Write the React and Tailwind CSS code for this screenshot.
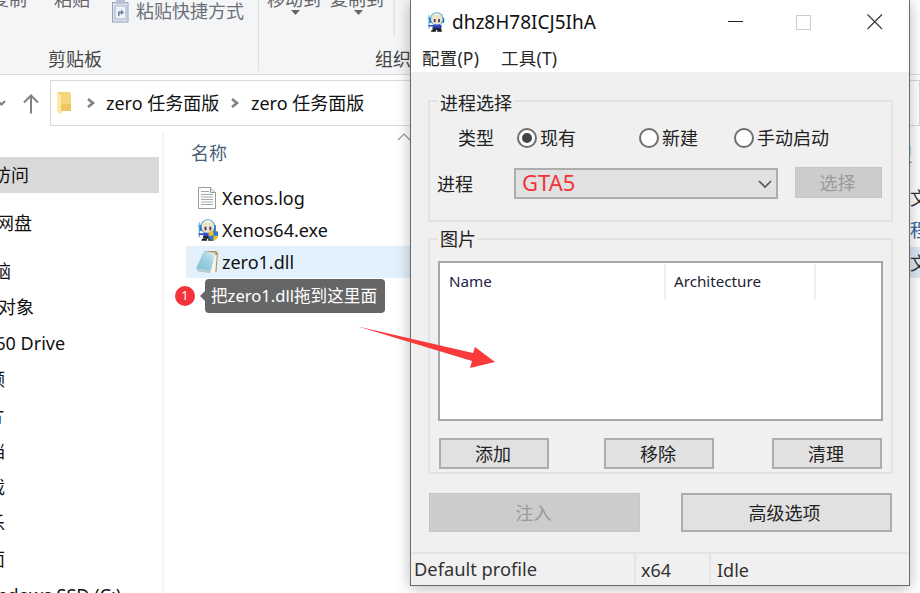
import React from "react";

const FONT = "font-['Noto_Sans','Noto_Sans_CJK_SC',sans-serif]";

function Mascot({ size = 20, shield = false }) {
  return (
    <svg width={size} height={size} viewBox="0 0 20 20" className="shrink-0">
      <path d="M1.5 7 L3 2 L4.5 7 Z" fill="#6fc4ea" />
      <path d="M3 6.5 V16.5" stroke="#4f9fd4" strokeWidth="1" />
      <circle cx="10.8" cy="7" r="6.8" fill="#4aa6d8" />
      <rect x="3.2" y="5.5" width="2.2" height="5.5" rx="1" fill="#2a7fb8" />
      <rect x="16.2" y="5.5" width="2" height="5.5" rx="1" fill="#2a7fb8" />
      <ellipse cx="10.8" cy="7" rx="5.8" ry="6" fill="#ebe6ca" />
      <path d="M7 3.2 C8.5 1.5 12.5 1.5 14 3 C12 2.6 9 2.6 7 3.2 Z" fill="#fffdf0" />
      <rect x="7.8" y="7" width="1.7" height="3.2" fill="#5a2a6a" />
      <rect x="12.2" y="7" width="1.7" height="3.2" fill="#5a2a6a" />
      <path d="M2.5 13 H7 L8 12.6 H14 L16 13.5 L15 16.5 H7 L6.5 14.6 H2.5 Z" fill="#3b48cc" />
      <path d="M6.5 15.5 H15 L15.5 18 H6.5 Z" fill="#1f2a40" />
      <path d="M5.5 18 H10 V19.8 H5 Z M11.2 18 H15.5 L16 19.8 H11.2 Z" fill="#1a1a1a" />
      {shield && (
        <g>
          <path d="M11.5 11.5 L15.8 10.4 L20 11.5 V15.5 C20 18 17.5 19.5 15.8 20 C14 19.5 11.5 18 11.5 15.5 Z" fill="#f0c030" />
          <path d="M15.8 10.4 L20 11.5 V15.3 H15.8 Z" fill="#2f78d0" />
          <path d="M11.5 15.3 H15.8 V20 C14 19.5 11.5 18 11.5 15.5 Z" fill="#2f78d0" />
        </g>
      )}
    </svg>
  );
}

function DocIcon() {
  return (
    <svg width="18" height="22" viewBox="0 0 18 22" className="shrink-0">
      <path d="M0.5 0.5 H12.5 L17.5 5.5 V21.5 H0.5 Z" fill="#fff" stroke="#9b9b9b" />
      <path d="M12.5 0.5 V5.5 H17.5" fill="#e8e8e8" stroke="#9b9b9b" />
      <path d="M3 4.5 H11 M3 7.5 H15 M3 10 H15 M3 12.5 H15 M3 15 H15 M3 17.5 H15" stroke="#a8a8a8" strokeWidth="1" />
    </svg>
  );
}

function NoteIcon() {
  return (
    <svg width="24" height="24" viewBox="0 0 24 24" className="shrink-0">
      <defs>
        <linearGradient id="notepad" x1="0" y1="1" x2="1" y2="0">
          <stop offset="0" stopColor="#7fc0d6" />
          <stop offset="0.55" stopColor="#9ed0e0" />
          <stop offset="1" stopColor="#dff1f6" />
        </linearGradient>
      </defs>
      <path d="M10 1 H21 L23 3 L21.5 22 H17 Z" fill="#b8935c" />
      <path d="M19 5 L21.8 5 L20.2 23 L15 23 Z" fill="#f4f4f4" />
      <path d="M9 1 L20.5 3 L15.5 21 L1 18.5 Z" fill="url(#notepad)" />
      <path d="M1 18.5 L15.5 21 L15 23 L3 21.5 Z" fill="#b9c9cf" />
    </svg>
  );
}

function Radio({ checked }) {
  return (
    <span className="w-5 h-5 rounded-full border-2 border-[#6e6e6e] bg-white flex items-center justify-center shrink-0">
      {checked && <span className="w-[10px] h-[10px] rounded-full bg-[#444]" />}
    </span>
  );
}

function Btn({ children, className = "" }) {
  return (
    <div className={"border-2 border-[#adadad] bg-[#e1e1e1] text-[#222] text-[18px] leading-none flex items-center justify-center " + className}>
      {children}
    </div>
  );
}

function Disabled({ children, className = "" }) {
  return (
    <div className={"bg-[#cccccc] border border-[#c6c6c6] text-[#9b9b9b] text-[18px] leading-none flex items-center justify-center " + className}>
      {children}
    </div>
  );
}

function Group({ title, className = "", titleClass = "", children }) {
  return (
    <div className={"relative border-2 border-[#e3e3e3] " + className}>
      <div className={"absolute left-[8px] bg-[#f0f0f0] px-[2px] text-[18px] leading-[18px] text-[#222] " + titleClass}>{title}</div>
      {children}
    </div>
  );
}

function Dialog() {
  return (
    <div className="absolute left-[410px] top-0 w-[500px] h-[586px] flex flex-col bg-white border-x border-b border-[#6a6a6a] shadow-[0_2px_14px_rgba(0,0,0,0.28)]">
      <div className="h-[44px] flex items-center pl-[15px] shrink-0">
        <Mascot size={20} />
        <span className="ml-[6px] text-[19px] leading-none text-[#111]">dhz8H78ICJ5IhA</span>
        <svg width="16" height="16" viewBox="0 0 16 16" className="ml-[132px]"><path d="M0 7.5 H15" stroke="#222" strokeWidth="1" /></svg>
        <span className="ml-[52px] w-[15px] h-[15px] border border-[#cccccc]" />
        <svg width="16" height="16" viewBox="0 0 16 16" className="ml-[56px]"><path d="M0.5 0.5 L15 15 M15 0.5 L0.5 15" stroke="#333" strokeWidth="1.1" /></svg>
      </div>
      <div className="h-[28px] pt-[2px] flex items-center pl-[11px] text-[17.5px] leading-none text-[#2a2a2a] tracking-[0.2px] shrink-0">
        <span>配置(P)</span>
        <span className="ml-[22px]">工具(T)</span>
      </div>
      <div className="flex-1 bg-[#f0f0f0] pl-[17px] pt-[28px] flex flex-col min-h-0">
        <Group title="进程选择" titleClass="top-[-8px]" className="w-[465px] h-[122px] pt-[22px]">
          <div className="h-7 flex items-center text-[18px] leading-none text-[#222]">
            <span className="w-[87px] pl-[28px] shrink-0">类型</span>
            <div className="w-[122px] flex items-center gap-[3px] shrink-0"><Radio checked /><span>现有</span></div>
            <div className="w-[95px] flex items-center gap-[3px] shrink-0"><Radio /><span>新建</span></div>
            <div className="flex items-center gap-[3px]"><Radio /><span>手动启动</span></div>
          </div>
          <div className="mt-[16px] flex items-start text-[18px] leading-none text-[#222]">
            <span className="w-[84px] pl-[7px] h-[31px] flex items-center shrink-0">进程</span>
            <div className="w-[264px] h-[31px] border-2 border-[#adadad] bg-[#e1e1e1] flex items-center justify-between pl-[6px] pr-[3px] shrink-0">
              <span className="text-[22px] leading-none -mt-[3px] text-[#f43538]">GTA5</span>
              <svg width="16" height="10" viewBox="0 0 16 10"><path d="M2 2 L8 8 L14 2" fill="none" stroke="#555" strokeWidth="1.6" /></svg>
            </div>
            <Disabled className="ml-[17px] -mt-px w-[87px] h-[31px] pr-[2px]">选择</Disabled>
          </div>
        </Group>
        <Group title="图片" titleClass="top-[-10px]" className="mt-[16px] w-[465px] h-[236px] pt-[21px] pl-[8px]">
          <div className="w-[445px] h-[160px] border-2 border-[#a4a6aa] bg-white flex items-start pt-px">
            <div className="w-[226px] h-[36px] border-r-2 border-[#efefef] flex items-center pl-[9px] text-[15.2px] leading-none text-[#22224a]">Name</div>
            <div className="w-[150px] h-[36px] border-r-2 border-[#efefef] flex items-center pl-[8px] text-[15.2px] leading-none text-[#223]">Architecture</div>
          </div>
          <div className="mt-[17px] ml-px flex">
            <Btn className="w-[110px] h-[31px] pr-[2px]">添加</Btn>
            <Btn className="ml-[55px] w-[110px] h-[31px] pr-[2px]">移除</Btn>
            <Btn className="ml-[58px] w-[110px] h-[31px] pr-[2px]">清理</Btn>
          </div>
        </Group>
        <div className="mt-[19px] ml-px flex">
          <Disabled className="w-[211px] h-[39px] pr-[2px]">注入</Disabled>
          <Btn className="ml-[41px] w-[211px] h-[39px] pr-[4px]">高级选项</Btn>
        </div>
      </div>
      <div className="bg-[#f0f0f0] h-[33px] shrink-0 border-t-2 border-[#e4e4e4] flex text-[18px] leading-none text-[#333]">
        <div className="w-[225px] border-r-2 border-[#e4e4e4] flex items-center pl-[3px] text-[18.3px]">Default profile</div>
        <div className="w-[75px] border-r-2 border-[#e4e4e4] flex items-center pl-[5px]">x64</div>
        <div className="flex-1 flex items-center pl-[6px]">Idle</div>
      </div>
    </div>
  );
}

function Ribbon() {
  return (
    <div className="h-[75px] flex shrink-0 border-b border-[#dadbdc] bg-white">
      <div className="w-[410px] bg-[#f4f5f7] flex overflow-hidden">
        <div className="w-[259px] h-[71px] border-r border-[#dfe0e2] flex flex-col shrink-0 overflow-hidden">
          <div className="h-[50px] flex items-start text-[#666] text-[18px] leading-[18px] shrink-0">
            <span className="-ml-[9px] -mt-[10px]">复制</span>
            <span className="ml-[27px] -mt-[10px]">粘贴</span>
            <svg width="17" height="23" viewBox="0 0 17 23" className="ml-[22px] shrink-0">
              <rect x="0.5" y="2.5" width="15.5" height="19.5" fill="#dde3ec" stroke="#92a4c0" />
              <rect x="4" y="0" width="9" height="4" fill="#b8c2d2" />
              <rect x="3" y="6" width="11" height="13" fill="#eef1f5" stroke="#a8b5c8" />
              <path d="M6 16 V11.5 H9 V9.5 L12 12.5 L9 15 V13.5 H7.5 V16 Z" fill="#6f83a3" />
            </svg>
            <span className="ml-[7px] mt-[2px] text-[#6b7078] whitespace-nowrap">粘贴快捷方式</span>
          </div>
          <div className="pl-[48px] text-[18px] leading-[18px] text-[#444]">剪贴板</div>
        </div>
        <div className="flex-1 flex flex-col min-w-0">
          <div className="h-[50px] flex items-start text-[#666] text-[18px] leading-[18px] shrink-0">
            <div className="ml-[8px] w-[63px] -mt-[10px] flex flex-col">
              <span className="whitespace-nowrap">移动到</span>
              <svg width="10" height="6" viewBox="0 0 10 6" className="ml-[24px] mt-[2px]"><path d="M0 0 H9 L4.5 5 Z" fill="#666" /></svg>
            </div>
            <div className="w-[63px] -mt-[10px] flex flex-col">
              <span className="whitespace-nowrap">复制到</span>
              <svg width="10" height="6" viewBox="0 0 10 6" className="ml-[24px] mt-[2px]"><path d="M0 0 H9 L4.5 5 Z" fill="#666" /></svg>
            </div>
            <span className="w-[2px] h-[35px] ml-[0px] bg-[#e4e5e7]" />
          </div>
          <div className="pl-[116px] text-[18px] leading-[18px] text-[#444] whitespace-nowrap">组织</div>
        </div>
      </div>
    </div>
  );
}

function AddressRow() {
  return (
    <div className="h-[57px] flex items-start shrink-0 bg-white">
      <div className="w-[50px] h-[57px] relative shrink-0 overflow-hidden">
        <svg width="8" height="8" viewBox="0 0 8 8" className="absolute left-0 top-[24px]"><path d="M-3 1 L1.5 5.5 L5 2" fill="none" stroke="#808080" strokeWidth="2" /></svg>
        <svg width="16" height="20" viewBox="0 0 16 20" className="absolute left-[23px] top-[19px]"><path d="M8 19.5 V1.5 M1 8.5 L8 1.5 L15 8.5" fill="none" stroke="#808080" strokeWidth="2" /></svg>
      </div>
      <div className="mt-[5px] h-[46px] flex-1 border border-[#d9d9d9] flex items-center pl-[6px] text-[18px] leading-none text-[#111] whitespace-nowrap">
        <svg width="15" height="22" viewBox="0 0 15 22" className="shrink-0">
          <path d="M0 0 H13 L14 3 V19 H5 L3 22 L0 19 Z" fill="#f5d67e" />
          <path d="M0 0 L4 4 V21 L0 19 Z" fill="#fbeaa8" />
          <path d="M4 12 H14 V19 H4 Z" fill="#edc65f" />
        </svg>
        <svg width="10" height="12" viewBox="0 0 10 12" className="ml-[14px]"><path d="M2 2 L7 6 L2 10" fill="none" stroke="#808080" strokeWidth="2.6" /></svg>
        <span className="ml-[10px] w-[114px]">zero 任务面版</span>
        <svg width="10" height="12" viewBox="0 0 10 12" className="ml-[10px]"><path d="M2 2 L7 6 L2 10" fill="none" stroke="#808080" strokeWidth="2.6" /></svg>
        <span className="ml-[11px]">zero 任务面版</span>
      </div>
    </div>
  );
}

const navItems = [
  ["快速访问", "ml-[-43px]", ""],
  ["百度网盘", "ml-[-40px]", "mt-3"],
  ["此电脑", "ml-[-43px]", "mt-3"],
  ["3D 对象", "ml-[-30px]", ""],
  ["360 Drive", "ml-[-15px]", ""],
  ["视频", "ml-[-31px]", ""],
  ["图片", "ml-[-31px]", ""],
  ["文档", "ml-[-31px]", ""],
  ["下载", "ml-[-31px]", ""],
  ["音乐", "ml-[-31px]", ""],
  ["桌面", "ml-[-31px]", ""],
  ["Windows SSD (C:)", "ml-[-25px]", ""],
];

function Sidebar() {
  return (
    <div className="w-[164px] h-full shrink-0 border-r-2 border-[#f5f5f5] pt-[25px] overflow-hidden text-[18px] leading-none text-[#111]">
      {navItems.map(([label, ml, mt], i) => (
        <div key={label} className={"h-9 w-[159px] flex items-center whitespace-nowrap " + mt + (i === 0 ? " bg-[#d9d9d9]" : "")}>
          <span className={ml}>{label}</span>
        </div>
      ))}
    </div>
  );
}

function FileRow({ icon, name, selected }) {
  return (
    <div className={"h-8 flex items-center text-[18px] leading-none text-[#111] " + (selected ? "bg-[#e2f1fc]" : "")}>
      <div className="w-[36px] pl-[6px] flex justify-center shrink-0">{icon}</div>
      <span>{name}</span>
    </div>
  );
}

function FileList() {
  return (
    <div className="flex-1 min-w-0 h-full pl-[22px] relative">
      <div className="pt-[12px] pl-[5px] h-[50px] text-[18px] leading-[18px] text-[#4c607a]">名称</div>
      <svg width="14" height="8" viewBox="0 0 14 8" className="absolute left-[233px] top-[1px]"><path d="M1 7 L7 1 L13 7" fill="none" stroke="#9a9a9a" strokeWidth="1.2" /></svg>
      <FileRow icon={<DocIcon />} name="Xenos.log" />
      <FileRow icon={<Mascot size={22} shield />} name="Xenos64.exe" />
      <FileRow icon={<NoteIcon />} name="zero1.dll" selected />
    </div>
  );
}

function Details() {
  return (
    <div className="w-[10px] h-full shrink-0 overflow-hidden text-[18px] leading-none whitespace-nowrap">
      <div className="mt-[14px] h-[18px] -ml-[16px] text-[#2f6fc0]">型</div>
      <div className="mt-[25px] h-[18px] text-[#333]">文本</div>
      <div className="mt-[14px] h-[18px] text-[#2f5f9f]">程序</div>
      <div className="mt-[8px] h-[31px] flex items-center bg-[#dce9f6] text-[#333]">文件</div>
    </div>
  );
}

export default function App() {
  return (
    <div className={"relative w-[920px] h-[593px] overflow-hidden bg-white " + FONT}>
      <div className="h-full flex flex-col">
        <Ribbon />
        <AddressRow />
        <div className="flex-1 min-h-0 flex border-t-0">
          <Sidebar />
          <FileList />
          <Details />
        </div>
      </div>

      <div className="absolute left-[175px] top-[279px] flex items-center">
        <span className="w-5 h-5 rounded-full bg-[#f5333a] text-white text-[12px] leading-none flex items-center justify-center">1</span>
        <span className="ml-[5px] w-0 h-0 border-y-[5px] border-y-transparent border-r-[5px] border-r-[#666]" />
        <div className="w-[180px] h-[34px] rounded bg-[#666666] text-white text-[16.6px] leading-none flex items-center pl-[6px] whitespace-nowrap">把zero1.dll拖到这里面</div>
      </div>

      <Dialog />

      <svg width="150" height="50" viewBox="0 0 150 50" className="absolute left-[355px] top-[323px]">
        <path d="M3 3.5 L118 30 L120 24 L140 39 L115 45 L117 38 Z" fill="#f83a3a" />
      </svg>
    </div>
  );
}
